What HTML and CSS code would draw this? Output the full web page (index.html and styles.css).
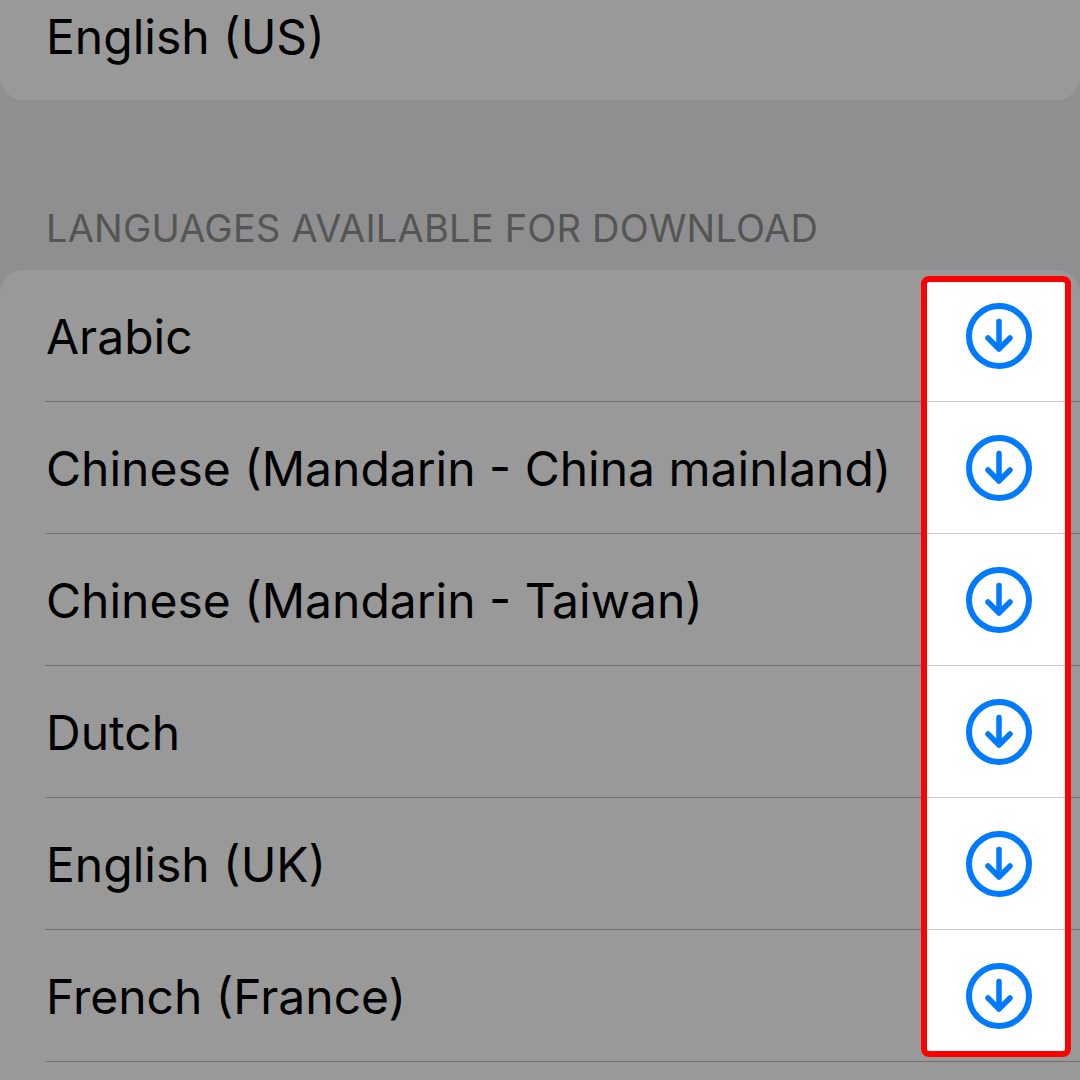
FILE: index.html
```html
<!DOCTYPE html>
<html lang="en">
<head>
    <meta charset="UTF-8">
    <meta name="viewport" content="width=device-width, initial-scale=1.0">
    <title>Languages</title>
    <link rel="stylesheet" href="styles.css">
</head>
<body>

    <main class="page">
        <section class="card card-current">
            <div class="current-name">English (US)</div>
        </section>

        <h2 class="section-title">LANGUAGES AVAILABLE FOR DOWNLOAD</h2>

        <section class="card card-languages">
            <div class="row">Arabic</div>
            <div class="row">Chinese (Mandarin - China mainland)</div>
            <div class="row">Chinese (Mandarin - Taiwan)</div>
            <div class="row">Dutch</div>
            <div class="row">English (UK)</div>
            <div class="row">French (France)</div>

            <div class="highlight">
                <div class="icon-list">
                    <div class="icon-row"><svg class="download-icon" viewBox="0 0 66 66"><circle cx="33" cy="33" r="30"/><path d="M33 18.5V46M22 35L33 46L44 35"/></svg></div>
                    <div class="icon-row"><svg class="download-icon" viewBox="0 0 66 66"><circle cx="33" cy="33" r="30"/><path d="M33 18.5V46M22 35L33 46L44 35"/></svg></div>
                    <div class="icon-row"><svg class="download-icon" viewBox="0 0 66 66"><circle cx="33" cy="33" r="30"/><path d="M33 18.5V46M22 35L33 46L44 35"/></svg></div>
                    <div class="icon-row"><svg class="download-icon" viewBox="0 0 66 66"><circle cx="33" cy="33" r="30"/><path d="M33 18.5V46M22 35L33 46L44 35"/></svg></div>
                    <div class="icon-row"><svg class="download-icon" viewBox="0 0 66 66"><circle cx="33" cy="33" r="30"/><path d="M33 18.5V46M22 35L33 46L44 35"/></svg></div>
                    <div class="icon-row"><svg class="download-icon" viewBox="0 0 66 66"><circle cx="33" cy="33" r="30"/><path d="M33 18.5V46M22 35L33 46L44 35"/></svg></div>
                </div>
            </div>
        </section>
    </main>

</body>
</html>
```

FILE: styles.css
```css
body {
    font-family: 'Inter', 'Liberation Sans', sans-serif;
    margin: 0;
    padding: 0;
    background-color: #8f8f91;
    color: #000;
}

.page {
    height: 1080px;
    overflow: hidden;
}

.card {
    background-color: #999;
}

.card-current {
    height: 100px;
    padding-left: 46px;
    border-radius: 0 0 24px 24px;
    box-sizing: border-box;
}

.current-name {
    font-size: 48px;
    line-height: 74px;
}

.section-title {
    margin: 0;
    padding: 108px 0 0 46px;
    height: 62px;
    font-size: 38px;
    letter-spacing: 0.2px;
    font-weight: 400;
    line-height: 41px;
    color: #555;
}

.card-languages {
    position: relative;
    height: 810px;
    border-radius: 24px 24px 0 0;
}

.row {
    height: 132px;
    box-sizing: border-box;
    margin-left: 45px;
    padding-left: 1px;
    border-bottom: 1px solid #6f6f6f;
    font-size: 48px;
    line-height: 134px;
}

.highlight {
    position: absolute;
    top: 6px;
    left: 921px;
    width: 150px;
    height: 781px;
    box-sizing: border-box;
    border: 6px solid #ff0000;
    border-radius: 8px;
    background-color: #fff;
    overflow: hidden;
}

.icon-list {
    margin-top: -12px;
}

.icon-row {
    display: flex;
    align-items: center;
    justify-content: center;
    height: 132px;
    box-sizing: border-box;
    padding-left: 6px;
    border-bottom: 1px solid #c8c8c8;
}

.download-icon {
    width: 66px;
    height: 66px;
    fill: none;
    stroke: #007aff;
    stroke-width: 6;
    stroke-linecap: round;
    stroke-linejoin: round;
}

.download-icon path {
    stroke-width: 5.5;
}
```
